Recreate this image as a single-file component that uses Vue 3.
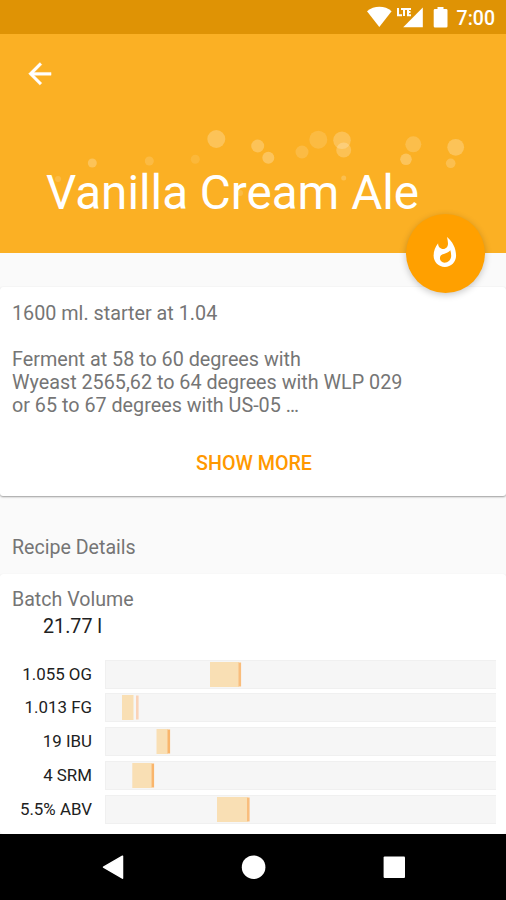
<script setup>
const bubbles = [
  [216.3, 139, 9, 0.24], [257.7, 146, 6.5, 0.24], [92.3, 163, 4.5, 0.24],
  [149.3, 161, 4.5, 0.15], [195.3, 159.3, 4.5, 0.1], [58, 179, 3, 0.15],
  [268.3, 157.7, 6, 0.26], [302, 152, 6.5, 0.15], [318.3, 139.7, 9, 0.14],
  [342, 140.3, 8.8, 0.22], [343.7, 150, 7.5, 0.22], [413.3, 144.3, 8, 0.18],
  [406, 159.3, 5.8, 0.25], [455.7, 147.3, 8.4, 0.24], [450.7, 163.3, 4.8, 0.2],
  [343.7, 178, 2.5, 0.2], [240, 193, 3, 0.15],
]

// start / width: style range, mark: position of the recipe's value
const stats = [
  { label: '1.055 OG', start: 105, width: 29, mark: 133.5, color: '#f9bd7c' },
  { label: '1.013 FG', start: 17, width: 11.5, mark: 31, color: '#fad3b8' },
  { label: '19 IBU', start: 51.5, width: 11.5, mark: 62.5, color: '#f9b56c' },
  { label: '4 SRM', start: 27.3, width: 19.5, mark: 46.5, color: '#f9b56c' },
  { label: '5.5% ABV', start: 112, width: 30.5, mark: 142, color: '#f9bd7c' },
]
</script>

<template>
  <div class="screen">
    <div class="status">
      <svg class="status-icons" viewBox="0 0 90 34">
        <path d="M0 11.2C7 5.4 18 5.4 24.6 11.2L12.3 27Z" fill="#fff" />
        <path d="M55.8 7.5V27.2H36.2Z" fill="#fff" />
        <path d="M31 8V15.2H35M34 8.9H40M37 9V16M44 8.9H41V15.2H44M41 12H43.5" fill="none" stroke="#fff" stroke-width="2" />
        <path d="M70.5 7H76.5V9H79.2Q80.5 9 80.5 10.3V26.2Q80.5 27.5 79.2 27.5H68Q66.7 27.5 66.7 26.2V10.3Q66.7 9 68 9H70.5Z" fill="#fff" />
      </svg>
      <span class="clock">7:00</span>
    </div>

    <header class="hero">
      <svg class="bubbles" viewBox="0 34 506 220">
        <circle v-for="(b, i) in bubbles" :key="i" :cx="b[0]" :cy="b[1]" :r="b[2]" fill="#fff" :fill-opacity="b[3]" />
      </svg>
      <svg class="back" viewBox="0 0 24 24">
        <path d="M20 11H7.83l5.59-5.59L12 4l-8 8 8 8 1.41-1.41L7.83 13H20v-2z" fill="#fff" stroke="#fff" stroke-width="0.3" />
      </svg>
      <h1 class="title">Vanilla Cream Ale</h1>
      <div class="fab">
        <svg class="flame" viewBox="0 0 24 24">
          <path fill="#fff" d="M13.5.67s.74 2.65.74 4.8c0 2.06-1.35 3.73-3.41 3.73-2.07 0-3.63-1.67-3.63-3.73l.03-.36C5.21 7.51 4 10.62 4 14c0 4.42 3.58 8 8 8s8-3.58 8-8C20 8.61 17.41 3.8 13.5.67zM11.71 19c-1.78 0-3.22-1.4-3.22-3.14 0-1.62 1.05-2.76 2.81-3.12 1.77-.36 3.6-1.21 4.62-2.58.39 1.29.59 2.65.59 4.04 0 2.65-2.15 4.8-4.8 4.8z" />
        </svg>
      </div>
    </header>

    <section class="card notes">
      <p class="text">1600 ml. starter at 1.04<br><br>Ferment at 58 to 60 degrees with<br>Wyeast 2565,62 to 64 degrees with WLP 029<br>or 65 to 67 degrees with US-05 …</p>
      <div class="more">SHOW MORE</div>
    </section>

    <h2 class="section-title">Recipe Details</h2>

    <section class="card details">
      <div class="caption">Batch Volume</div>
      <div class="volume">21.77 l</div>
      <div class="stats">
        <div v-for="s in stats" :key="s.label" class="row">
          <span class="label">{{ s.label }}</span>
          <svg class="track" viewBox="0 0 391 29">
            <rect width="391" height="29" fill="#f0f0f0" />
            <rect x="1" y="1" width="390" height="27" fill="#f6f6f6" />
            <rect :x="s.start" y="2" :width="s.width" height="25" fill="#f9dfb4" />
            <rect :x="s.mark" y="2.5" width="2.6" height="24" :fill="s.color" />
          </svg>
        </div>
      </div>
    </section>

    <nav class="nav">
      <svg viewBox="0 0 506 67">
        <path d="M103.5 33.2L122.5 22.2V44.2Z" fill="#fff" stroke="#fff" stroke-width="1.5" stroke-linejoin="round" />
        <circle cx="253.6" cy="33.2" r="11.8" fill="#fff" />
        <rect x="383.6" y="22.4" width="21.4" height="21.6" rx="1" fill="#fff" />
      </svg>
    </nav>
  </div>
</template>

<style>
body {
  margin: 0;
}
</style>

<style scoped>
.screen {
  width: 506px;
  height: 900px;
  display: flex;
  flex-direction: column;
  overflow: hidden;
  background: #fafafa;
  font-family: Roboto, "Liberation Sans", sans-serif;
}
.status {
  flex: none;
  height: 34px;
  background: #df9305;
  display: flex;
  justify-content: flex-end;
  align-items: center;
  padding-right: 11px;
}
.status-icons {
  width: 90px;
  height: 34px;
}
.clock {
  color: #fff;
  font-size: 19.5px;
  font-weight: 500;
  line-height: 34px;
  padding-top: 3px;
}
.hero {
  flex: none;
  position: relative;
  height: 219px;
  box-sizing: border-box;
  background: #fbb024;
  padding: 23px 0 0 23px;
}
.bubbles {
  position: absolute;
  left: 0;
  top: 0;
  width: 506px;
  height: 220px;
}
.back {
  display: block;
  width: 33.7px;
  height: 33.7px;
}
.title {
  position: relative;
  margin: 73px 0 0 23px;
  color: #fff;
  font-size: 47.6px;
  font-weight: 400;
  line-height: 58px;
  white-space: nowrap;
}
.fab {
  position: absolute;
  left: 405.5px;
  top: 179.5px;
  width: 79px;
  height: 79px;
  border-radius: 50%;
  background: #ffa000;
  box-shadow: 0 2px 7px rgba(0, 0, 0, 0.22);
  display: flex;
  align-items: center;
  justify-content: center;
}
.flame {
  width: 33.7px;
  height: 33.7px;
}
.card {
  flex: none;
  background: #fff;
  border-radius: 3px;
  box-sizing: border-box;
}
.notes {
  margin-top: 33.5px;
  height: 209.5px;
  padding: 15.5px 12px 0;
  box-shadow: 0 1px 2px rgba(0, 0, 0, 0.38);
}
.text {
  margin: 0;
  color: #757575;
  font-size: 19.75px;
  line-height: 23px;
  white-space: nowrap;
}
.more {
  margin-top: 35px;
  padding-left: 2px;
  color: #ff9800;
  font-size: 19.7px;
  font-weight: 500;
  line-height: 23px;
  text-align: center;
}
.section-title {
  flex: none;
  margin: 40px 0 0 12px;
  color: #757575;
  font-size: 19.6px;
  font-weight: 400;
  line-height: 23px;
}
.details {
  margin-top: 15px;
  height: 260px;
  padding: 14px 10px 0 12px;
  box-shadow: 0 0 1px rgba(0, 0, 0, 0.1);
}
.caption {
  color: #757575;
  font-size: 19.6px;
  line-height: 23px;
}
.volume {
  margin: 4px 0 0 31px;
  color: #212121;
  font-size: 19.7px;
  line-height: 23px;
}
.stats {
  margin-top: 21.5px;
  display: flex;
  flex-direction: column;
  gap: 4.75px;
}
.row {
  height: 29px;
  display: flex;
  align-items: center;
  justify-content: space-between;
}
.label {
  width: 80px;
  color: #212121;
  font-size: 16.9px;
  line-height: 29px;
  text-align: right;
  white-space: nowrap;
}
.track {
  width: 391px;
  height: 29px;
}
.nav {
  flex: none;
  height: 67px;
  background: #000;
}
.nav svg {
  display: block;
  width: 506px;
  height: 67px;
}
</style>
